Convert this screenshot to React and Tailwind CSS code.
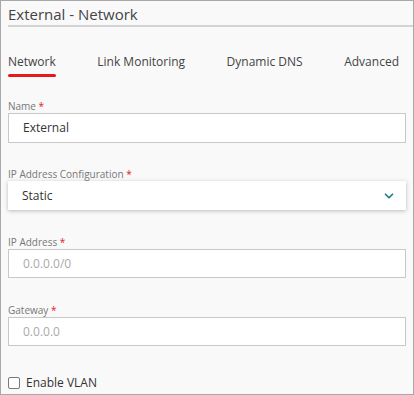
import { ChevronDown } from 'lucide-react'

const TABS = ['Network', 'Link Monitoring', 'Dynamic DNS', 'Advanced']

function Label({ children }) {
  return (
    <div className="text-[10px] leading-[12px] text-[#777] mb-[1px]">
      {children} <span className="text-[#e02020]">*</span>
    </div>
  )
}

export default function App() {
  return (
    <div
      className="w-[414px] h-[395px] bg-[#f9f9f9] border border-[#a8a8a8] overflow-hidden text-[#333]"
      style={{ fontFamily: '"Open Sans", "Noto Sans", sans-serif' }}
    >
      <div className="pl-[7px] pt-[3px]">
        <div className="text-[15px] leading-[20px] text-[#444]">External - Network</div>
        <div className="h-[2px] bg-[#d4d4d4] mt-[1px]" />
      </div>

      <div className="flex items-start justify-between pl-[7px] pr-[14px] mt-[27px] text-[12px] text-[#444]">
        {TABS.map((t, i) => (
          <div key={t} className="flex flex-col">
            <span className="leading-[16px]">{t}</span>
            {i === 0 && <span className="h-[3px] bg-[#e51c1c] rounded-full mt-[4px]" />}
          </div>
        ))}
      </div>

      <div className="px-[7px] mt-[23px]">
        <Label>Name</Label>
        <div className="h-[30px] bg-white border border-[#c8c8c8] flex items-center pl-[14px] text-[12px] text-[#333]">
          External
        </div>

        <div className="mt-[25px]">
          <Label>IP Address Configuration</Label>
          <div className="h-[29px] bg-white shadow-[0_1px_4px_rgba(0,0,0,0.25)] flex items-center justify-between pl-[14px] pr-[10px] text-[12px] text-[#333]">
            <span>Static</span>
            <ChevronDown size={14} strokeWidth={3} className="text-[#1f7a8c]" />
          </div>
        </div>

        <div className="mt-[26px]">
          <Label>IP Address</Label>
          <div className="h-[29px] bg-white border border-[#c8c8c8] flex items-center pl-[14px] text-[12px] text-[#aaa]">
            0.0.0.0/0
          </div>
        </div>

        <div className="mt-[26px]">
          <Label>Gateway</Label>
          <div className="h-[29px] bg-white border border-[#c8c8c8] flex items-center pl-[14px] text-[12px] text-[#aaa]">
            0.0.0.0
          </div>
        </div>

        <label className="flex items-center gap-[6px] mt-[29px] text-[12px] leading-[16px] text-[#333]">
          <span className="w-[12px] h-[12px] border border-[#777] rounded-[2px] bg-white" />
          Enable VLAN
        </label>
      </div>
    </div>
  )
}
